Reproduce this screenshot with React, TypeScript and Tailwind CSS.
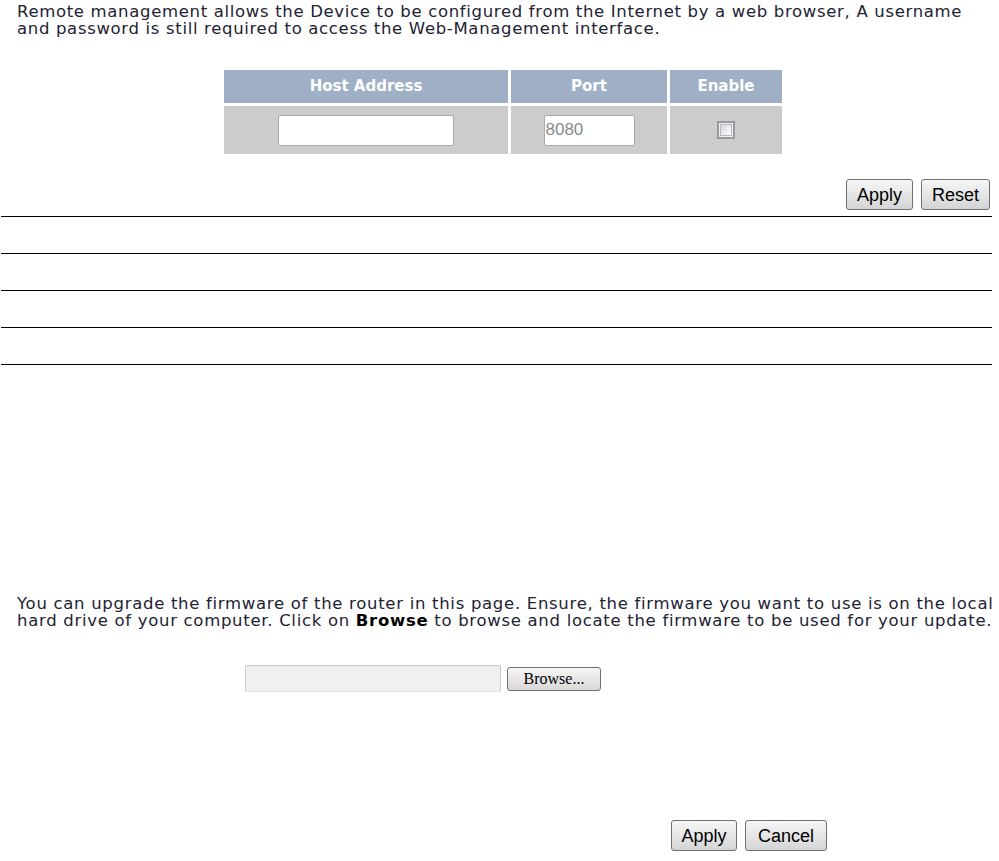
import React from "react";

const textFont = "font-['DejaVu_Sans',Verdana,sans-serif]";

function GrayButton({ label, className = "" }: { label: string; className?: string }) {
  return (
    <button
      className={`h-[31px] rounded-[3px] border border-[#707070] bg-gradient-to-b from-[#f6f6f6] via-[#e6e6e6] to-[#d4d4d4] font-['Liberation_Sans',Arial,sans-serif] text-[18px] text-black leading-none ${className}`}
    >
      {label}
    </button>
  );
}

export default function App() {
  return (
    <div className={`w-[999px] h-[861px] bg-white text-[#222233] ${textFont}`}>
      {/* remote management */}
      <p className="pl-[17px] pt-[3px] text-[16.5px] leading-[17px] tracking-[0.67px]">
        Remote management allows the Device to be configured from the Internet by a web browser, A username
        <br />
        and password is still required to access the Web-Management interface.
      </p>

      <div className="ml-[224px] mt-[33px] w-[558px] grid grid-cols-[284px_156px_112px] gap-[3px]">
        <div className="h-[33px] bg-[#9eafc6] flex items-center justify-center text-white font-bold text-[15px]">Host Address</div>
        <div className="h-[33px] bg-[#9eafc6] flex items-center justify-center text-white font-bold text-[15px]">Port</div>
        <div className="h-[33px] bg-[#9eafc6] flex items-center justify-center text-white font-bold text-[15px]">Enable</div>
        <div className="h-[48px] bg-[#cccccc] flex items-center justify-center">
          <input className="w-[176px] h-[31px] bg-white border border-[#a8a8a8] rounded-[2px] outline-none" />
        </div>
        <div className="h-[48px] bg-[#cccccc] flex items-center justify-center">
          <input
            defaultValue="8080"
            className="w-[91px] h-[31px] bg-white border border-[#a8a8a8] rounded-[2px] px-[1px] text-[17px] text-[#8a8a8a] font-['Liberation_Sans_Narrow','Liberation_Sans',Arial,sans-serif] outline-none"
          />
        </div>
        <div className="h-[48px] bg-[#cccccc] flex items-center justify-center">
          <span className="block w-[18px] h-[18px] border-2 border-[#9a9a9a] p-[1px] bg-[#eeeeee]">
            <span className="block w-full h-full border border-[#b8b8b8] bg-gradient-to-br from-[#d4d8e2] to-[#ffffff]" />
          </span>
        </div>
      </div>

      <div className="flex justify-end gap-[8px] pr-[9px] mt-[25px]">
        <GrayButton label="Apply" className="w-[67px]" />
        <GrayButton label="Reset" className="w-[69px]" />
      </div>

      <div className="mt-[6px] w-[991px] ml-[1px]">
        <div className="h-[37px] border-t border-black" />
        <div className="h-[37px] border-t border-black" />
        <div className="h-[37px] border-t border-black" />
        <div className="h-[37px] border-t border-black" />
        <div className="border-t border-black" />
      </div>

      {/* firmware upgrade */}
      <p className="pl-[17px] mt-[230px] text-[16.5px] leading-[17px] tracking-[0.7px]">
        You can upgrade the firmware of the router in this page. Ensure, the firmware you want to use is on the local
        <br />
        hard drive of your computer. Click on <b className="font-bold text-black">Browse</b> to browse and locate the firmware to be used for your update.
      </p>

      <div className="ml-[245px] mt-[36px] flex items-center gap-[6px]">
        <div className="w-[256px] h-[27px] bg-[#f0f0f0] border border-[#c8c8c8] border-b-[#dde4ec] rounded-[2px]" />
        <button className="w-[94px] h-[24px] rounded-[3px] border border-[#707070] bg-gradient-to-b from-[#f6f6f6] to-[#d8d8d8] font-['Liberation_Serif','Times_New_Roman',serif] text-[16px] text-black leading-none">
          Browse...
        </button>
      </div>

      <div className="ml-[671px] mt-[128px] flex gap-[8px]">
        <GrayButton label="Apply" className="w-[66px]" />
        <GrayButton label="Cancel" className="w-[82px]" />
      </div>
    </div>
  );
}
